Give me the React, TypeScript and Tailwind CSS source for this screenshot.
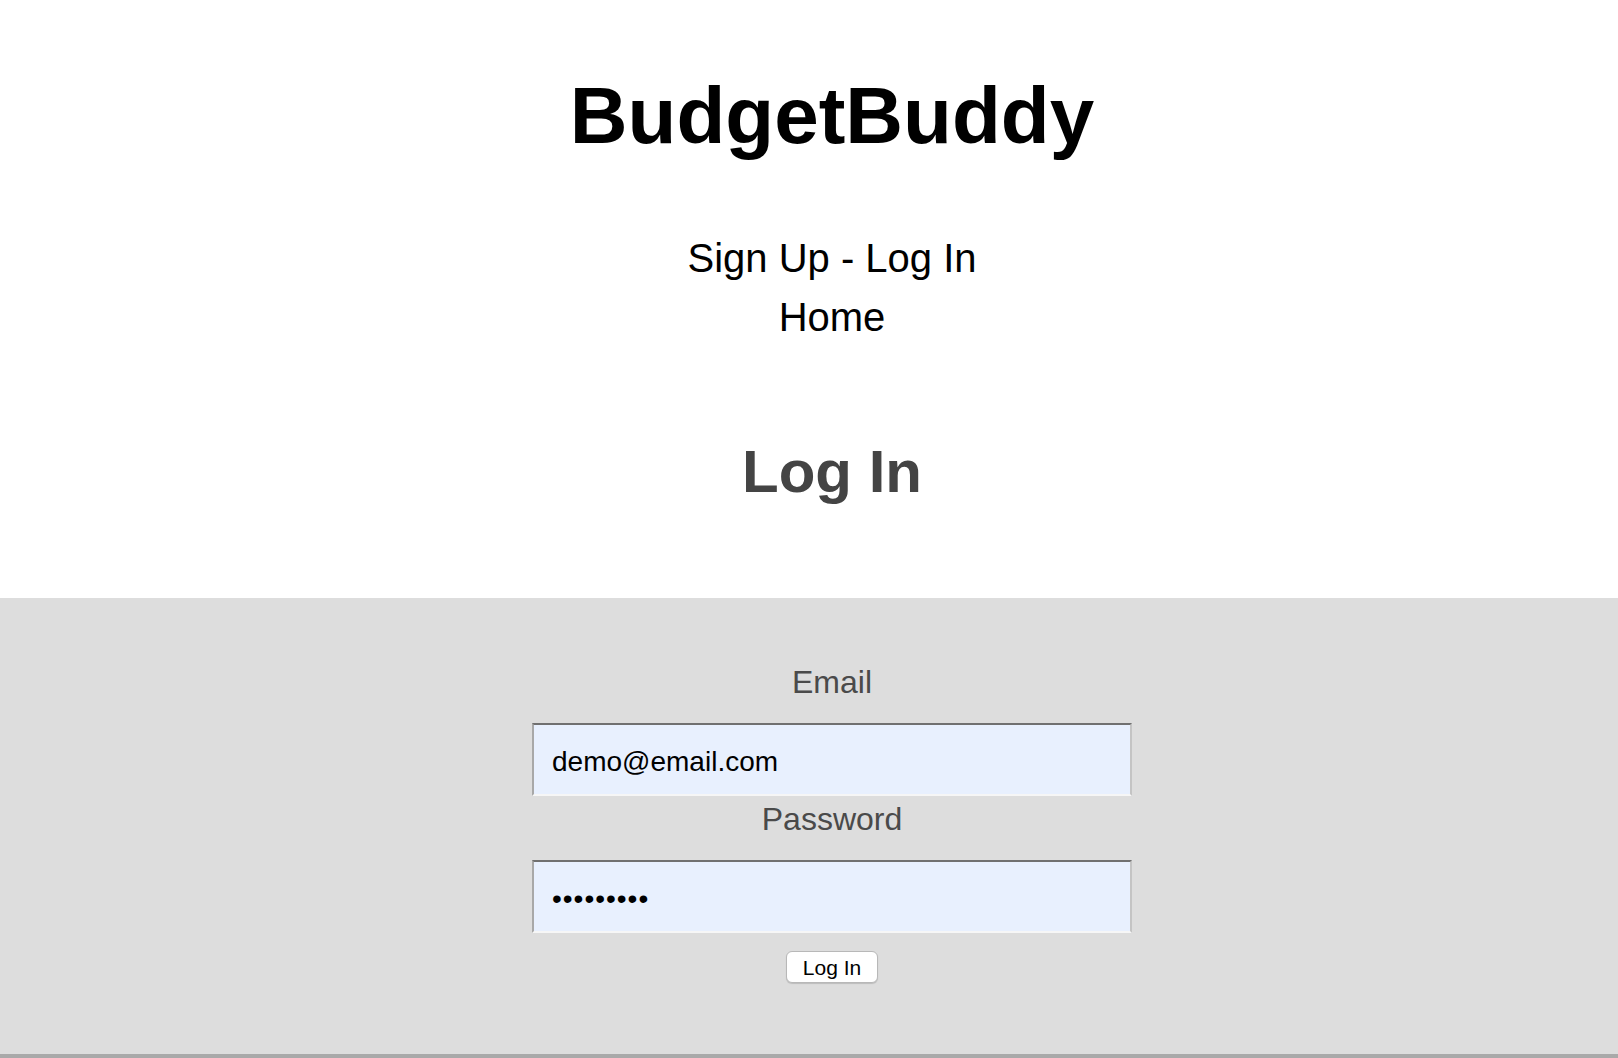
import React from 'react';

const font = "font-['Liberation_Sans',Arial,Helvetica,sans-serif]";

export default function App() {
  return (
    <div className={`min-h-screen bg-white ${font}`}>
      <header className="pl-[46px] text-center">
        <h1 className="pt-[70px] text-[80px] font-bold leading-[92px] text-black">BudgetBuddy</h1>
        <nav className="mt-[73px] flex flex-col items-center gap-[13px] text-[40px] leading-[46px] text-black">
          <div>
            <a href="#">Sign Up</a> - <a href="#">Log In</a>
          </div>
          <a href="#">Home</a>
        </nav>
        <h2 className="mt-[98px] text-[60px] font-bold leading-[68px] text-[#444444]">Log In</h2>
      </header>

      <main className="mt-[92px] bg-[#dddddd] pl-[46px] pt-[66px] pb-[71px]">
        <form className="mx-auto flex w-[600px] flex-col items-center" onSubmit={(e) => e.preventDefault()}>
          <label htmlFor="email" className="text-[32px] leading-[37px] text-[#4a4a4a]">Email</label>
          <input
            id="email"
            type="email"
            readOnly
            value="demo@email.com"
            className={`mt-[22px] h-[73px] w-[600px] border-2 border-t-[#707070] border-l-[#a8a8a8] border-r-[#c4c4c4] border-b-[#f6f6f6] bg-[#e8f0fe] pl-[18px] pt-[4px] text-[28px] text-black outline-none ${font}`}
          />
          <label htmlFor="password" className="mt-[5px] text-[32px] leading-[37px] text-[#4a4a4a]">Password</label>
          <input
            id="password"
            type="password"
            readOnly
            value="password1"
            className={`mt-[22px] h-[73px] w-[600px] border-2 border-t-[#707070] border-l-[#a8a8a8] border-r-[#c4c4c4] border-b-[#f6f6f6] bg-[#e8f0fe] pl-[18px] pt-[4px] text-[28px] tracking-[1px] text-black outline-none ${font}`}
          />
          <button
            type="submit"
            className="mt-[18px] h-[32px] w-[92px] rounded-[6px] border border-[#b8b8b8] bg-white text-[21px] leading-none text-black shadow-[0_1px_1px_rgba(0,0,0,0.15)]"
          >
            Log In
          </button>
        </form>
      </main>
      <div className="h-[20px] bg-[#a9a9a9]" />
    </div>
  );
}
